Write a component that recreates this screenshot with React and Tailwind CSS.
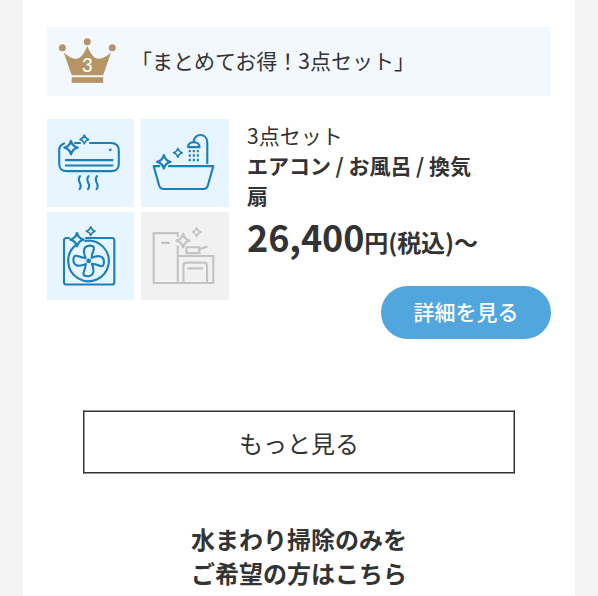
function Star({ x, y, r = 6.6 }) {
    return (
        <path
            transform={`translate(${x} ${y}) scale(${r / 6})`}
            d="M0-6C.9-2.6 2.6-.9 6 0C2.6.9.9 2.6 0 6C-.9 2.6-2.6.9-6 0C-2.6-.9-.9-2.6 0-6Z"
        />
    );
}

function Icon({ children, className }) {
    return (
        <svg
            viewBox="0 0 87 87"
            className={className}
            fill="none"
            stroke="currentColor"
            strokeWidth="2.1"
            strokeLinecap="round"
            strokeLinejoin="round"
        >
            {children}
        </svg>
    );
}

function AirConditioner() {
    return (
        <>
            <path d="M17 24.3Q12.2 26 12.2 31V44.500Q12.2 52 20 52H64Q71.800 52 71.800 44.500V31.500Q71.800 23.800 64 23.800H43M28 23.800H33" />
            <path d="M18.800 41H65.500M18.800 46.300H65.500" />
            <circle cx="63.300" cy="30.700" r="1.300" fill="currentColor" stroke="none" />
            {[32.5, 41, 49.5].map((x) => (
                <path key={x} d={`M${x + 0.5} 57C${x - 4} 62.500 ${x + 4.5} 64.500 ${x} 70`} />
            ))}
            <Star x={24} y={28.5} />
            <Star x={37.3} y={20.3} r={4.4} />
        </>
    );
}

function Bath() {
    return (
        <>
            <path d="M18 47H12.300L17.800 66.500Q18.800 69.800 22 69.800H62Q65.200 69.800 66.200 66.500L71.700 47H27.500" />
            <path d="M65.700 44V23.500C65.700 13.500 52.200 13.500 52.200 23" />
            <path d="M46.500 28C46.500 21.500 58 21.500 58 28Z" />
            <path
                d="M48.300 30.800V42M52.300 30.800V42M56.300 30.800V42"
                strokeDasharray="2.400 2"
                strokeLinecap="butt"
            />
            <Star x={22.4} y={42.7} />
            <Star x={36.4} y={33.7} r={4.4} />
        </>
    );
}

function Fan() {
    return (
        <>
            <path d="M22 25.800H19.500Q17 25.800 17 28.300V70Q17 72.300 19.500 72.300H65Q67.300 72.300 67.300 70V28.300Q67.300 25.800 65 25.800H39" />
            <path d="M28.500 33.200A20.300 20.300 0 1 0 38.500 28.700" />
            {[0, 90, 180, 270].map((deg) => (
                <path
                    key={deg}
                    transform={`rotate(${deg} 41.700 48.800)`}
                    d="M38.500 46C37.500 42.500 36.500 40.500 37 38C37.500 33.500 43 32.500 46.500 34.500C48.500 37.500 44 40.500 45 45.300"
                />
            ))}
            <circle cx="41.700" cy="48.800" r="2.400" fill="currentColor" stroke="none" />
            <Star x={30} y={27.5} />
            <Star x={43.7} y={19} r={4.4} />
        </>
    );
}

function Kitchen() {
    return (
        <>
            <g strokeLinecap="butt" strokeLinejoin="miter">
                <path d="M36.300 25V21H12.300V70.800H71.700V43.800H36.300M36.300 33.500V70.800" />
                <path d="M42 70.500V53.500Q42 50.500 45 50.500H62.500Q65.500 50.500 65.500 53.500V70.500" />
                <path d="M45 35.200H57.800V41H45Z" />
            </g>
            <path d="M20.700 30.800H27.500M46.700 56.200H60.500M57.800 37.200L65 34.700" />
            <Star x={41.5} y={28.5} />
            <Star x={55.1} y={20} r={4.4} />
        </>
    );
}

function Crown() {
    return (
        <svg viewBox="0 0 59 46" className="mt-[-1px] h-[46px] w-[59px] shrink-0" fill="#b59566">
            <circle cx="4.400" cy="9.800" r="3.500" />
            <circle cx="29.300" cy="3.800" r="3.500" />
            <circle cx="54.300" cy="9.800" r="3.500" />
            <path d="M5.700 14.500C10 18 13.500 20.800 18 20.800C23 20.800 26.500 14.500 29.300 8C32 14.500 35.500 20.800 40.500 20.800C45 20.800 49 18 53 14.500L45.200 37.300H13.800Z" />
            <rect x="13.700" y="39.200" width="31.500" height="5.700" />
            <text
                x="29.300"
                y="34"
                textAnchor="middle"
                fontSize="18.500"
                fontFamily="Lato, sans-serif"
                fill="#fff"
                stroke="#fff"
                strokeWidth=".2"
            >
                3
            </text>
        </svg>
    );
}

const services = [
    { id: "aircon", icon: AirConditioner, active: true },
    { id: "bath", icon: Bath, active: true },
    { id: "fan", icon: Fan, active: true },
    { id: "kitchen", icon: Kitchen, active: false },
];

function App() {
    return (
        <div className="h-[596px] overflow-hidden bg-[#f4f4f4] px-[23px] font-['Noto_Sans_CJK_JP',sans-serif] text-[#333]">
            <main className="h-full bg-white px-6 pt-[26.6px]">
                <h2 className="flex h-[69px] items-center bg-[#f3f8ff] pl-[11px] text-[21px] font-normal">
                    <Crown />
                    <span className="mt-[-1px] ml-[14px]">「まとめてお得！3点セット」</span>
                </h2>
                <div className="mt-[23.9px] flex">
                    <div className="grid h-[180.3px] w-[182px] shrink-0 grid-cols-[87px_88px] gap-x-[7px] gap-y-[5.7px]">
                        {services.map(({ id, icon: Drawing, active }) => (
                            <div
                                key={id}
                                className={
                                    active
                                        ? "h-[87.3px] bg-[#e6f5ff] text-[#1c7fb8]"
                                        : "h-[87.3px] bg-[#f1f1f1] text-[#c3c3c3]"
                                }
                            >
                                <Icon className="size-full">
                                    <Drawing />
                                </Icon>
                            </div>
                        ))}
                    </div>
                    <div className="ml-[18px] h-[180.3px] w-[240px] pt-[0.6px] text-[21px] leading-[30px]">
                        <p>3点セット</p>
                        <p className="font-bold tracking-[-0.03px]">エアコン / お風呂 / 換気扇</p>
                        <p className="mt-[-1px] text-[24px] leading-[54px] font-bold tracking-[-0.1px] whitespace-nowrap">
                            <span className="text-[36px]">26,400</span>円(税込)〜
                        </p>
                    </div>
                </div>
                <div className="mt-[-14px] flex justify-end">
                    <button className="h-[53px] w-[170px] rounded-full bg-[#51a7dd] pb-[1px] text-[21px] font-medium text-white">
                        詳細を見る
                    </button>
                </div>
                <button className="mx-auto mt-[71px] block h-[64px] w-[432px] border border-x-[#333] border-y-[#999] pt-[2px] text-[24px] shadow-[inset_0_1px_#333,inset_0_-1px_#333,inset_1px_0_#999,inset_-1px_0_#999]">
                    もっと見る
                </button>
                <p className="mt-[48px] text-center text-[24px] leading-[34px] font-bold">
                    水まわり掃除のみを
                    <br />
                    ご希望の方はこちら
                </p>
            </main>
        </div>
    );
}

export default App;
